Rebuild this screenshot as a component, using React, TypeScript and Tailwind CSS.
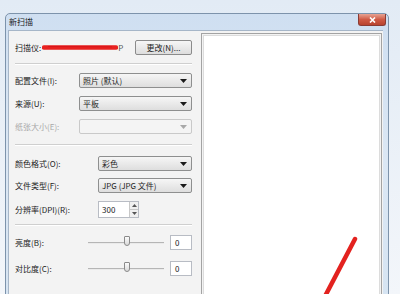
import React from "react";

const font = { fontFamily: '"Noto Sans CJK SC", "Noto Sans", sans-serif' };

function Arrow({ disabled }: { disabled?: boolean }) {
  return (
    <svg width="7" height="4" viewBox="0 0 7 4" className="ml-auto mr-[4px]">
      <path d="M0 0 L7 0 L3.5 4 Z" fill={disabled ? "#a8a8a8" : "#1a1a1a"} />
    </svg>
  );
}

function Select({ text, disabled, h = "h-[15px]" }: { text?: string; disabled?: boolean; h?: string }) {
  return (
    <div
      className={`flex flex-1 items-center ${h} rounded-[2px] border ${
        disabled
          ? "border-[#c9c9c9] bg-[#f4f4f4]"
          : "border-[#8e8f8f] bg-gradient-to-b from-[#f6f6f6] to-[#dedede]"
      } pl-[3px] text-[8px] text-[#1e1e1e]`}
    >
      <span className="leading-none">{text}</span>
      <Arrow disabled={disabled} />
    </div>
  );
}

function Row({ label, w, children, mt, disabled }: { label: string; w: string; children: React.ReactNode; mt: string; disabled?: boolean }) {
  return (
    <div className={`flex items-center ${mt}`}>
      <div className={`${w} shrink-0 text-[8px] leading-none ${disabled ? "text-[#a8a8a8]" : "text-[#222]"}`}>{label}</div>
      {children}
    </div>
  );
}

function Slider({ mt, label }: { mt: string; label: string }) {
  return (
    <div className={`flex items-center ${mt} h-[15px]`}>
      <div className="w-[73px] shrink-0 text-[8px] leading-none text-[#222]">{label}</div>
      <div className="relative flex h-[15px] w-[76px] items-center">
        <div className="h-[2px] w-full border-t border-[#b5b5b5] bg-[#eaeaea]" />
        <div className="absolute left-[36px] top-[1px] h-[10px] w-[6px] rounded-b-[3px] rounded-t-[1px] border border-[#8a8a8a] bg-gradient-to-b from-[#fbfbfb] to-[#d9d9d9]" />
      </div>
      <div className="ml-[6px] flex h-[15px] w-[22px] items-center border border-[#b8bcc4] bg-white pl-[4px] text-[8px] leading-none text-[#222]">
        0
      </div>
    </div>
  );
}

export default function App() {
  return (
    <div className="h-[294px] w-[400px] overflow-hidden bg-gradient-to-b from-[#e2ebf5] to-[#f3f6fa]" style={font}>
      <div className="pl-[5px] pt-[13px]">
        <div className="h-[290px] w-[384px] rounded-t-[5px] border border-[#7d93ab] bg-gradient-to-b from-[#cfdff1] via-[#dbe7f4] to-[#d6e4f2]">
          {/* title bar */}
          <div className="flex h-[16px] items-start">
            <div className="ml-[3px] mt-[4px] text-[8px] leading-none text-[#1a1a1a]">新扫描</div>
            <div className="ml-auto mr-[2px] flex h-[12px] w-[28px] items-center justify-center rounded-b-[3px] border border-[#8a3b34] border-t-0 bg-gradient-to-b from-[#e7a393] via-[#cf5a45] to-[#b8432f]">
              <svg width="7" height="6" viewBox="0 0 7 6">
                <path d="M1 0.5 L6 5.5 M6 0.5 L1 5.5" stroke="#ffffff" strokeWidth="1.6" />
              </svg>
            </div>
          </div>
          {/* client */}
          <div className="ml-[2px] mr-[5px] flex h-[270px] border-l border-t border-[#a6b6c8] bg-[#f3f3f3]">
            {/* left panel */}
            <div className="flex w-[189px] shrink-0 flex-col pl-[6px] pr-[6px] pt-[9px]">
              <div className="flex h-[15px] items-center">
                <span className="text-[8px] leading-none text-[#222]">扫描仪:</span>
                <svg width="76" height="7" viewBox="0 0 76 7" className="ml-[1px]">
                  <path d="M2 3.5 L74 3.5" stroke="#e8211f" strokeWidth="4.5" fill="none" strokeLinecap="round" />
                  <path d="M6 2.5 L70 2.8" stroke="#d8151a" strokeWidth="1" fill="none" />
                </svg>
                <span className="text-[8px] leading-none text-[#555]">P</span>
                <div className="ml-auto flex h-[15px] w-[57px] items-center justify-center rounded-[2px] border border-[#8b8b8b] bg-gradient-to-b from-[#f6f6f6] to-[#dddddd] text-[8px] leading-none text-[#222]">
                  更改(N)...
                </div>
              </div>
              <div className="mt-[8px] h-[2px] border-t border-[#cfcfcf] bg-white" />
              <Row label="配置文件(I):" w="w-[64px]" mt="mt-[8px]">
                <Select text="照片 (默认)" />
              </Row>
              <Row label="来源(U):" w="w-[64px]" mt="mt-[8px]">
                <Select text="平板" />
              </Row>
              <Row label="纸张大小(E):" w="w-[64px]" mt="mt-[8px]" disabled>
                <Select disabled />
              </Row>
              <div className="mt-[10px] h-[2px] border-t border-[#cfcfcf] bg-white" />
              <Row label="颜色格式(O):" w="w-[83px]" mt="mt-[10px]">
                <Select text="彩色" />
              </Row>
              <Row label="文件类型(F):" w="w-[83px]" mt="mt-[7px]">
                <Select text="JPG (JPG 文件)" />
              </Row>
              <Row label="分辨率(DPI)(R):" w="w-[83px]" mt="mt-[8px]">
                <div className="flex h-[17px] w-[41px] border border-[#b8bcc4] bg-white">
                  <div className="flex flex-1 items-center pl-[3px] text-[8px] leading-none text-[#222]">300</div>
                  <div className="flex w-[9px] flex-col border-l border-[#c8c8c8]">
                    <div className="flex flex-1 items-center justify-center border-b border-[#c8c8c8] bg-[#f0f0f0]">
                      <svg width="5" height="3" viewBox="0 0 5 3"><path d="M0 3 L5 3 L2.5 0 Z" fill="#555" /></svg>
                    </div>
                    <div className="flex flex-1 items-center justify-center bg-[#f0f0f0]">
                      <svg width="5" height="3" viewBox="0 0 5 3"><path d="M0 0 L5 0 L2.5 3 Z" fill="#555" /></svg>
                    </div>
                  </div>
                </div>
              </Row>
              <div className="mt-[6px] h-[2px] border-t border-[#cfcfcf] bg-white" />
              <Slider mt="mt-[9px]" label="亮度(B):" />
              <Slider mt="mt-[11px]" label="对比度(C):" />
            </div>
            {/* preview */}
            <div className="ml-[3px] mt-[2px] h-[270px] w-[181px] border border-[#a3a3a3] p-px">
              <div className="relative h-full w-full border border-[#dcdcdc] bg-white">
                <svg className="absolute left-0 top-0" width="179" height="268" viewBox="0 0 179 268">
                  <path d="M151 203 L118 266" stroke="#e3221f" strokeWidth="4.5" strokeLinecap="round" />
                </svg>
              </div>
            </div>
          </div>
        </div>
      </div>
    </div>
  );
}
